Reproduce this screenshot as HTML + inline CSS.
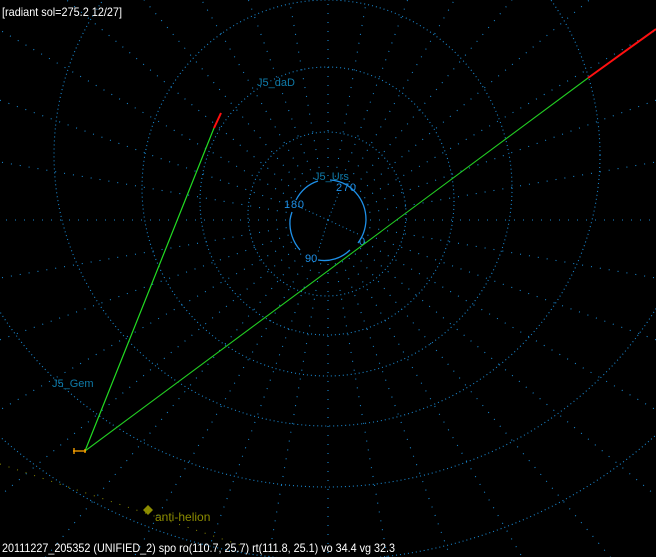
<!DOCTYPE html>
<html><head><style>
html,body{margin:0;padding:0;background:#000;width:656px;height:557px;overflow:hidden}
svg{display:block}
text{font-family:"Liberation Sans",sans-serif;font-size:11px}
</style></head><body>
<svg width="656" height="557" viewBox="0 0 656 557" xmlns="http://www.w3.org/2000/svg" style="overflow:hidden">
<rect width="656" height="557" fill="#000"/>
<g fill="none" stroke="#1a88d0" stroke-width="1.1" stroke-dasharray="1 3">
<ellipse cx="327" cy="214" rx="79" ry="82"/>
<ellipse cx="327" cy="201" rx="127" ry="134"/>
<ellipse cx="327" cy="188" rx="185" ry="188"/>
<ellipse cx="327" cy="155" rx="273" ry="271"/>
<ellipse cx="327" cy="130" rx="380" ry="357"/>
<ellipse cx="327" cy="100" rx="480" ry="460"/>
</g>
<g stroke="#1a88d0" stroke-width="1.1" stroke-dasharray="1 8" id="sp"></g>
<g fill="none" stroke="#1e90e8" stroke-width="1.3">
<path d="M296 200 A38 40 0 0 1 318 181"/>
<path d="M330 180 A38 40 0 0 1 366 220 A38 40 0 0 1 358 243"/>
<path d="M350 250 A38 40 0 0 1 318 260"/>
<path d="M300 250 A38 40 0 0 1 290 220 A38 40 0 0 1 292 212"/>
</g>
<line x1="328" y1="220" x2="295" y2="205" stroke="#1a88d0" stroke-dasharray="1 3"/>
<line x1="328" y1="220" x2="340" y2="190" stroke="#1a88d0" stroke-dasharray="1 3"/>
<line x1="328" y1="220" x2="360" y2="235" stroke="#1a88d0" stroke-dasharray="1 3"/>
<line x1="328" y1="220" x2="318" y2="252" stroke="#1a88d0" stroke-dasharray="1 3"/>
<g fill="#1e90e8" style="font-size:12px">
<text x="336" y="191" textLength="20">270</text>
<text x="284" y="208" textLength="20">180</text>
<text x="359" y="245">0</text>
<text x="305" y="262">90</text>
</g>
<g fill="#0f7aa8" style="font-size:12px">
<text x="314" y="180">J5_Urs</text>
<text x="257" y="86">J5_daD</text>
<text x="52" y="387">J5_Gem</text>
</g>
<line x1="0" y1="464" x2="240" y2="545" stroke="#8c8c00" stroke-dasharray="1 8"/>
<path d="M148 505 L153 510 L148 515 L143 510 Z" fill="#8c8c00"/>
<text x="155" y="521" fill="#8c8c00" style="font-size:12px">anti-helion</text>
<line x1="85" y1="451" x2="214" y2="128" stroke="#22dd22" stroke-width="1.2"/>
<line x1="214" y1="128" x2="221" y2="113" stroke="#ff1010" stroke-width="2"/>
<line x1="85" y1="451" x2="588" y2="78" stroke="#22cc22" stroke-width="1.1"/>
<line x1="588" y1="78" x2="656" y2="29" stroke="#ff1010" stroke-width="2"/>
<g stroke="#ffa500" stroke-width="1.3">
<line x1="73" y1="451" x2="86" y2="451"/>
<line x1="74" y1="448" x2="74" y2="454"/>
<line x1="85" y1="449" x2="85" y2="453"/>
</g>
<text x="2" y="16" fill="#fff" style="font-size:12px" textLength="120" lengthAdjust="spacingAndGlyphs">[radiant sol=275.2 12/27]</text>
<text x="2" y="552" fill="#fff" style="font-size:12px" textLength="393" lengthAdjust="spacingAndGlyphs">20111227_205352 (UNIFIED_2) spo ro(110.7, 25.7) rt(111.8, 25.1) vo 34.4 vg 32.3</text>
</svg>
<script>
var g=document.getElementById('sp'),s='';
for(var i=0;i<36;i++){var a=i*Math.PI/18,c=Math.cos(a),d=Math.sin(a);
s+='<line x1="'+(328+42*c)+'" y1="'+(220+44*d)+'" x2="'+(328+700*c)+'" y2="'+(220+700*d)+'"/>';}
g.innerHTML=s;
</script>
</body></html>
